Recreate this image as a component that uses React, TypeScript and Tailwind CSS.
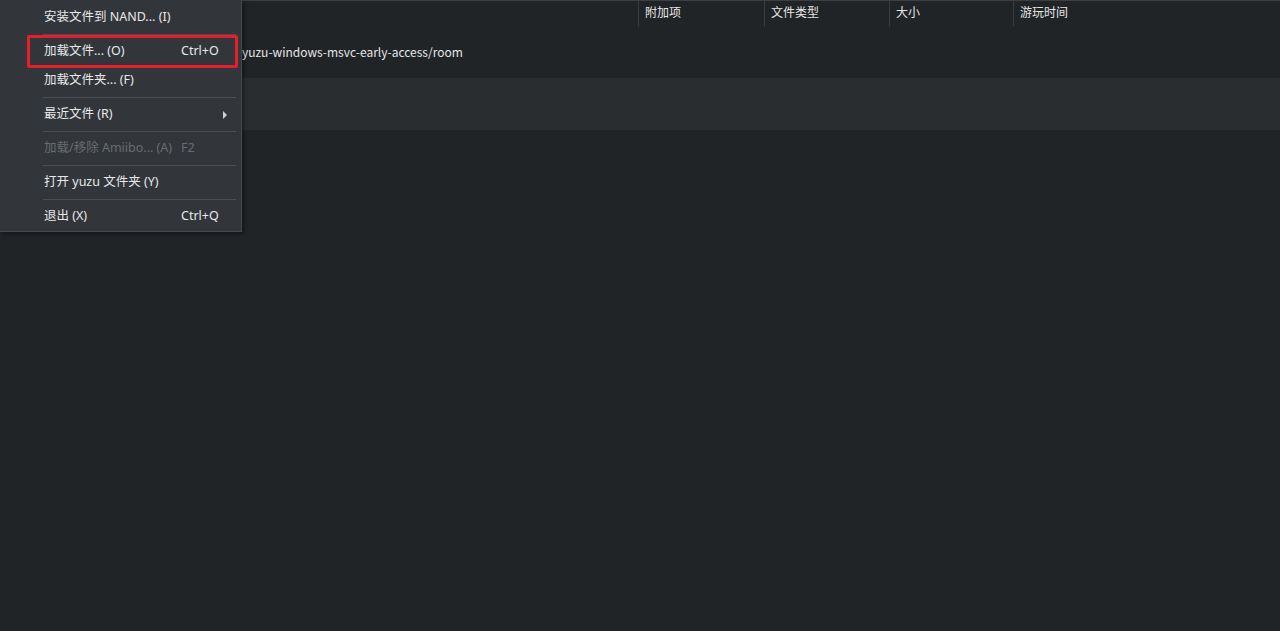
type Item =
  | { sep: true }
  | { label: string; shortcut?: string; disabled?: boolean; sub?: boolean; active?: boolean };

const menu: Item[] = [
  { label: "安装文件到 NAND... (I)" },
  { sep: true },
  { label: "加载文件... (O)", shortcut: "Ctrl+O", active: true },
  { label: "加载文件夹... (F)" },
  { sep: true },
  { label: "最近文件 (R)", sub: true },
  { sep: true },
  { label: "加载/移除 Amiibo... (A)", shortcut: "F2", disabled: true },
  { sep: true },
  { label: "打开 yuzu 文件夹 (Y)" },
  { sep: true },
  { label: "退出 (X)", shortcut: "Ctrl+Q" },
];

const cols = [
  { name: "", w: "w-[638px]" },
  { name: "附加项", w: "w-[126px]" },
  { name: "文件类型", w: "w-[125px]" },
  { name: "大小", w: "w-[124px]" },
  { name: "游玩时间", w: "flex-1" },
];

const font = { fontFamily: '"Noto Sans", "Noto Sans CJK SC", sans-serif' };
const pathFont = { fontFamily: '"Noto Sans CJK SC", "Noto Sans", sans-serif' };

export default function App() {
  return (
    <div className="relative w-[1280px] h-[631px] bg-[#212427] overflow-hidden text-[12px] text-[#e6e6e6]" style={font}>
      {/* game list */}
      <div className="flex flex-col">
        <div className="flex h-[26px] border-t border-[#3c3f42]">
          {cols.map((c, i) => (
            <div key={i} className={`${c.w} flex items-center pl-[6px] pb-px ${i > 0 ? "border-l border-[#3b3e41]" : ""}`}>
              {c.name}
            </div>
          ))}
        </div>
        <div className="h-[52px] flex items-center pl-[242px] text-[12px]" style={pathFont}>
          yuzu-windows-msvc-early-access/room
        </div>
        <div className="h-[52px] bg-[#2a2d30]" />
      </div>

      {/* file menu */}
      <div className="absolute left-0 top-0 w-[242px] bg-[#32363a] border-r border-b border-[#45494d] pt-[3px] text-[12.5px] shadow-[2px_2px_4px_rgba(0,0,0,0.4)]">
        {menu.map((m, i) =>
          "sep" in m ? (
            <div key={i} className="h-[5px] flex items-center pl-[43px] pr-[5px]">
              <div className="h-px w-full bg-[#4a4e52]" />
            </div>
          ) : (
            <div
              key={i}
              className={`relative h-[29px] flex items-center pl-[44px] pr-[20px] ${m.disabled ? "text-[#686c70]" : "text-[#e8e8e8]"}`}
            >
              <span className="flex-1">{m.label}</span>
              {m.shortcut && <span className="w-[40px]">{m.shortcut}</span>}
              {m.sub && (
                <span className="absolute right-[14px] w-0 h-0 border-y-[4px] border-y-transparent border-l-[4px] border-l-[#d0d0d0]" />
              )}
              {m.active && (
                <div className="absolute left-[27px] -top-[2px] w-[211px] h-[33px] border-[3px] border-[#e0202a] rounded-[2px]" />
              )}
            </div>
          )
        )}
      </div>
    </div>
  );
}
